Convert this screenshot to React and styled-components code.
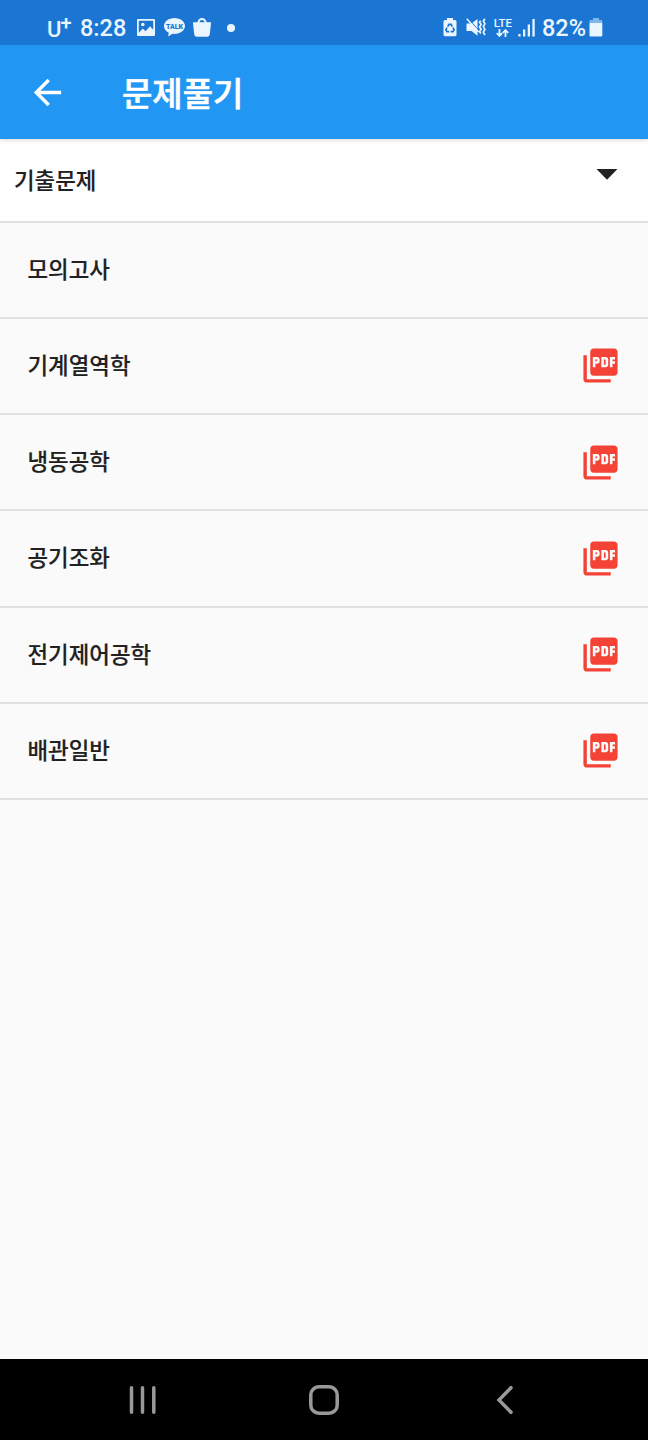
import React, { useState } from "react";
import styled, { createGlobalStyle } from "styled-components";
import { MdArrowBack, MdPictureAsPdf } from "react-icons/md";

const subjects = [
  { id: 1, name: "모의고사", pdf: false },
  { id: 2, name: "기계열역학", pdf: true },
  { id: 3, name: "냉동공학", pdf: true },
  { id: 4, name: "공기조화", pdf: true },
  { id: 5, name: "전기제어공학", pdf: true },
  { id: 6, name: "배관일반", pdf: true },
];

function StatusBar() {
  return (
    <Status>
      <StatusGroup>
        <Carrier>
          U<sup>+</sup>
        </Carrier>
        <StatusText $left={8}>8:28</StatusText>
        <StatusIcon $left={10.5} width="18" height="17" viewBox="0 0 18 17">
          <path
            fillRule="evenodd"
            d="M1 0h16a1 1 0 0 1 1 1v15a1 1 0 0 1-1 1H1a1 1 0 0 1-1-1V1a1 1 0 0 1 1-1zM1.800 1.800v12l4-4.300 2.700 2.700 4.500-5 3.200 3.600V1.800z"
          />
          <circle cx="5.800" cy="5.500" r="1.800" />
        </StatusIcon>
        <StatusIcon $left={9} width="21" height="19" viewBox="0 0 21 19">
          <path d="M10.500 0C4.700 0 0 3.600 0 8c0 2.900 1.900 5.400 4.800 6.800L4 18.600l4.700-2.800c.6.100 1.200.1 1.800.1 5.800 0 10.500-3.500 10.500-7.900S16.300 0 10.500 0z" />
          <BubbleText x="10.500" y="10.700" textAnchor="middle">
            TALK
          </BubbleText>
        </StatusIcon>
        <StatusIcon $left={8} width="18" height="19" viewBox="0 0 18 19">
          <path d="M.6 4.300h16.800c.4 0 .6.300.6.700l-1.200 11c-.2 1.800-1.200 2.800-2.700 2.800H3.900c-1.500 0-2.500-1-2.700-2.800L0 5c0-.4.200-.7.6-.7z" />
          <path
            d="M5.500 6V4.300a3.500 3.300 0 0 1 7 0V6"
            fill="none"
            stroke="#eaf5ff"
            strokeWidth="2"
          />
        </StatusIcon>
        <Dot />
      </StatusGroup>
      <StatusGroup>
        <StatusIcon $left={0} width="14" height="19" viewBox="0 0 14 19">
          <path d="M4 0h6v2h2a1.500 1.500 0 0 1 1.500 1.500v13A1.500 1.500 0 0 1 12 18.200H2a1.500 1.500 0 0 1-1.500-1.700v-13A1.500 1.500 0 0 1 2 2h2z" />
          <g fill="none" stroke="#1b74d1" strokeWidth="1.700">
            <path d="M4.700 8.600l1.300-2.300h2l1.300 2.300M10 9.700l1.100 2-1.100 1.900H7.700M6.200 13.600H3.900l-1-1.900 1.100-2" />
          </g>
        </StatusIcon>
        <StatusIcon $left={9} width="20" height="19" viewBox="0 0 20 19">
          <path d="M.5 5.600h5L11.500 1v16.800l-6-4.800h-5z" />
          <path d="M1.700 0L13 12.500" stroke="#1b74d1" strokeWidth="1" />
          <path d="M.8 .8L12.600 14" stroke="#eaf5ff" strokeWidth="1.500" />
          <path
            d="M14.600 2.800l-1 1.400 1.500 2.300-1.500 2.400 1.500 2.400-1.500 2.300 1.200 1.900M18.900.7l-1.600 2.400 1.600 2.700-1.600 2.800 1.600 2.800-1.600 2.700 1.600 2.900"
            fill="none"
            stroke="#eaf5ff"
            strokeWidth="1.700"
          />
        </StatusIcon>
        <Network>
          <span>LTE</span>
          <svg width="13" height="8" viewBox="0 0 13 8">
            <path
              d="M3.500 0v6.700M.8 4.200l2.700 2.700 2.700-2.700M9.500 8V1.300M6.800 3.800l2.700-2.700 2.700 2.700"
              fill="none"
              stroke="#eaf5ff"
              strokeWidth="1.800"
            />
          </svg>
        </Network>
        <StatusIcon $left={5} width="18" height="18" viewBox="0 0 18 18">
          <path d="M.3 15h2.300v2.500H.3zM5 10.500h2.300v7H5zM9.700 5.500H12v12H9.700zM14.400 0h2.300v17.500h-2.300z" />
        </StatusIcon>
        <StatusText $left={6}>82%</StatusText>
        <StatusIcon $left={3} width="14" height="19" viewBox="0 0 14 19">
          <path
            opacity="0.5"
            d="M4 0h6v2h2a1.300 1.300 0 0 1 1.300 1.300V5H.5V3.300A1.300 1.300 0 0 1 1.800 2H4z"
          />
          <path d="M.5 5h12.800v12.200a1.300 1.300 0 0 1-1.300 1.300H1.800a1.300 1.300 0 0 1-1.300-1.300z" />
        </StatusIcon>
      </StatusGroup>
    </Status>
  );
}

export default function App() {
  const [category] = useState("기출문제");

  return (
    <>
      <GlobalStyle />
      <Screen>
        <StatusBar />
        <AppBar>
          <BackButton aria-label="back">
            <MdArrowBack />
          </BackButton>
          <Title>문제풀기</Title>
        </AppBar>
        <Dropdown>
          <span>{category}</span>
          <svg width="22" height="11" viewBox="0 0 22 11">
            <path d="M.5 0h21L11 10.800z" fill="#212121" />
          </svg>
        </Dropdown>
        <List>
          {subjects.map((subject) => (
            <Row key={subject.id}>
              <span>{subject.name}</span>
              {subject.pdf && <MdPictureAsPdf />}
            </Row>
          ))}
        </List>
        <NavBar>
          <svg width="28" height="30" viewBox="0 0 28 30">
            <path d="M2.500 2.700v24.600M13.500 2.700v24.600M24.800 2.700v24.600" />
          </svg>
          <HomeIcon width="30" height="30" viewBox="0 0 30 30">
            <rect x="1.800" y="1.800" width="26.400" height="26.400" rx="8" />
          </HomeIcon>
          <svg width="18" height="30" viewBox="0 0 18 30">
            <path d="M15 2.700L3 15l12 12.300" />
          </svg>
        </NavBar>
      </Screen>
    </>
  );
}

const GlobalStyle = createGlobalStyle`
  body {
    margin: 0;
    background-color: #fafafa;
  }
  * {
    box-sizing: border-box;
  }
`;

const Screen = styled.div`
  display: flex;
  flex-direction: column;
  width: 648px;
  height: 1440px;
  overflow: hidden;
  background-color: #fafafa;
  color: #212121;
  font-family: Roboto, "Noto Sans CJK KR", sans-serif;
`;

const Status = styled.div`
  position: relative;
  z-index: 2;
  display: flex;
  justify-content: space-between;
  flex-shrink: 0;
  height: 45px;
  padding: 10px 45px 0 47px;
  background-color: #1b75d2;
  color: #eaf5ff;
`;

const StatusGroup = styled.div`
  display: flex;
  align-items: center;
`;

const StatusText = styled.span`
  margin-left: ${({ $left }) => $left}px;
  padding-top: 2px;
  font-size: 23.5px;
  font-weight: 500;
  line-height: 1;
`;

const Carrier = styled.span`
  display: flex;
  width: 25px;
  padding-top: 4px;
  font-size: 22px;
  font-weight: 500;
  line-height: 1;
  sup {
    margin-top: -6px;
    margin-left: -1px;
    font-size: 20px;
    line-height: 1;
  }
`;

const StatusIcon = styled.svg`
  flex-shrink: 0;
  margin-left: ${({ $left }) => $left}px;
  fill: #eaf5ff;
`;

const BubbleText = styled.text`
  fill: #1b75d2;
  font-size: 7px;
  font-weight: 900;
`;

const Dot = styled.span`
  width: 8px;
  height: 8px;
  margin-left: 16px;
  border-radius: 50%;
  background-color: #eaf5ff;
`;

const Network = styled.div`
  display: flex;
  flex-direction: column;
  align-items: center;
  gap: 1px;
  width: 20px;
  margin-left: 7px;
  font-size: 11.5px;
  font-weight: 500;
  line-height: 10px;
`;

const AppBar = styled.header`
  position: relative;
  z-index: 1;
  display: flex;
  align-items: center;
  flex-shrink: 0;
  height: 94px;
  padding-left: 27px;
  background-color: #2196f3;
  color: white;
  box-shadow: 0 1px 5px rgba(0, 0, 0, 0.16);
`;

const BackButton = styled.button`
  display: flex;
  padding: 0;
  border: none;
  background: none;
  color: inherit;
  font-size: 41px;
  cursor: pointer;
`;

const Title = styled.h1`
  margin: 5px 0 0 54px;
  font-size: 33px;
  font-weight: 500;
  line-height: 48px;
  -webkit-text-stroke: 0.6px currentColor;
`;

const Dropdown = styled.div`
  display: flex;
  justify-content: space-between;
  flex-shrink: 0;
  height: 83.5px;
  padding: 26px 30px 0 14px;
  border-bottom: 2px solid #e0e0e0;
  background-color: white;
  font-size: 22.4px;
  font-weight: 500;
  line-height: 32px;
  -webkit-text-stroke: 0.15px currentColor;
  svg {
    margin-top: 4px;
  }
`;

const List = styled.div`
  flex: 1;
`;

const Row = styled.div`
  display: flex;
  align-items: center;
  justify-content: space-between;
  height: 96.25px;
  padding: 0 27px 0 27.5px;
  border-bottom: 2px solid #e0e0e0;
  font-size: 22.4px;
  font-weight: 500;
  line-height: 32px;
  -webkit-text-stroke: 0.15px currentColor;
  svg {
    width: 41px;
    height: 41px;
    color: #f44336;
  }
`;

const NavBar = styled.nav`
  display: flex;
  align-items: center;
  flex-shrink: 0;
  height: 81px;
  padding-left: 129px;
  background-color: black;
  svg {
    fill: none;
    stroke: #999;
    stroke-width: 3.5;
    stroke-linecap: round;
  }
`;

const HomeIcon = styled.svg`
  margin: 0 157px 0 152px;
`;
